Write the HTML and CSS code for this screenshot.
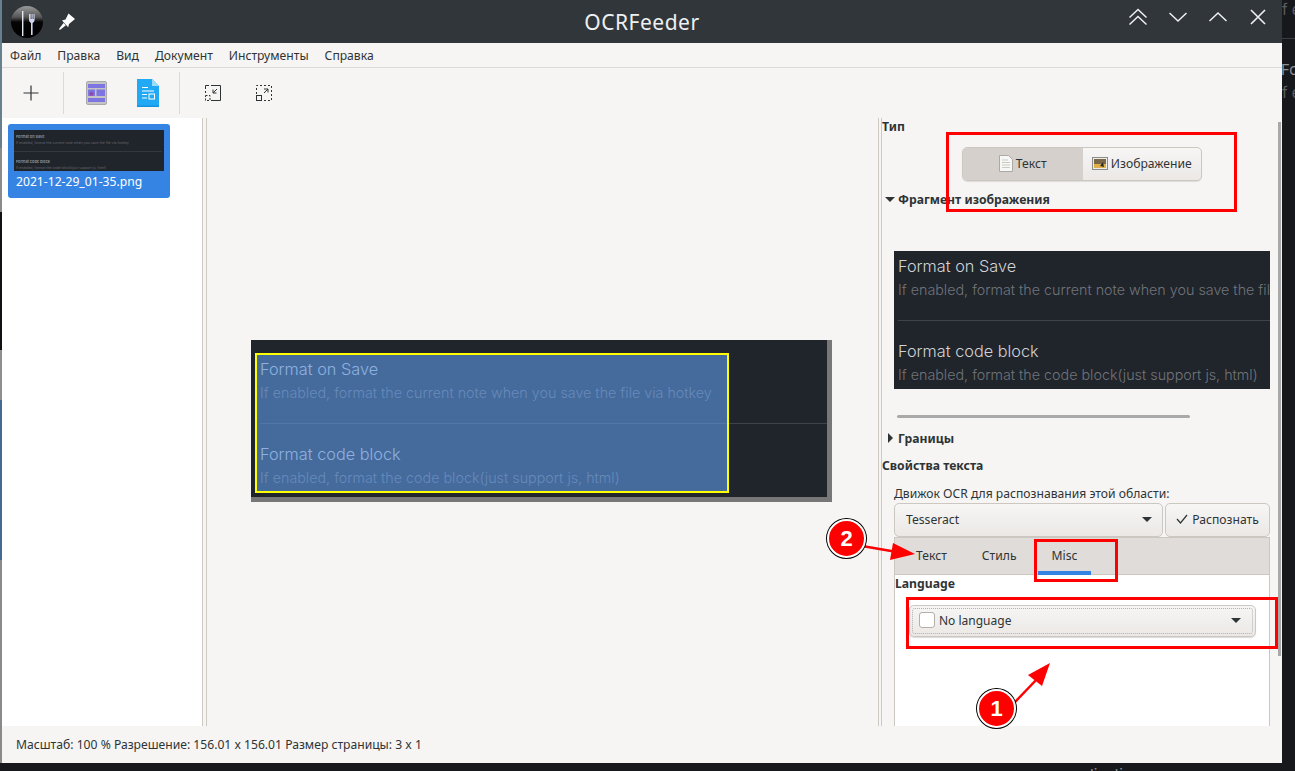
FILE: index.html
```html
<!DOCTYPE html>
<html lang="ru">
<head>
    <meta charset="UTF-8">
    <title>OCRFeeder</title>
    <link rel="stylesheet" href="styles.css">
</head>
<body>
<div class="desktop">
    <div class="desk-left">
        <div class="strip strip-a"></div>
        <div class="strip strip-b"></div>
        <div class="strip strip-c"></div>
        <div class="strip strip-d"></div>
        <div class="strip strip-e"></div>
        <div class="strip strip-f"></div>
    </div>

    <div class="window">
        <header class="titlebar">
            <svg class="app-icon" width="34" height="34" viewBox="0 0 34 34">
                <defs>
                    <linearGradient id="ball" x1="0" y1="0" x2="0" y2="1">
                        <stop offset="0" stop-color="#9a9a9a"/>
                        <stop offset="0.35" stop-color="#555"/>
                        <stop offset="0.5" stop-color="#050505"/>
                        <stop offset="1" stop-color="#000"/>
                    </linearGradient>
                </defs>
                <circle cx="17" cy="17" r="16" fill="url(#ball)"/>
                <path d="M12 6h1.400v25H12z" fill="#e4e8f4"/>
                <path d="M19 9v6q0 2 2 3v12h1.600V18q2-1 2-3V9h-1v5h-1V9h-1v5h-1V9z" fill="#cfd6f0"/>
            </svg>
            <svg class="pin-icon" width="20" height="20" viewBox="0 0 20 20">
                <path d="M11.500 1.500 18 7l-6 5-.8 3.200L5 8.600 8.500 7.600z" fill="#fff"/>
                <path d="M6.500 11 2 17l.9.9 6-4.600z" fill="#fff"/>
            </svg>
            <h1 class="title">OCRFeeder</h1>
            <div class="win-buttons">
                <svg width="18" height="18" viewBox="0 0 18 18"><path d="M.5 9.500 9 1.500l8.500 8M.5 16.500 9 8.500l8.500 8" fill="none" stroke="#eff0f1" stroke-width="1.500"/></svg>
                <svg width="18" height="18" viewBox="0 0 18 18"><path d="M.5 5 9 13l8.500-8" fill="none" stroke="#eff0f1" stroke-width="1.500"/></svg>
                <svg width="18" height="18" viewBox="0 0 18 18"><path d="M.5 13 9 5l8.500 8" fill="none" stroke="#eff0f1" stroke-width="1.500"/></svg>
                <svg width="18" height="18" viewBox="0 0 18 18"><path d="m2 2 14 14M16 2 2 16" fill="none" stroke="#eff0f1" stroke-width="1.600"/></svg>
            </div>
        </header>

        <nav class="menubar">
            <span>Файл</span>
            <span>Правка</span>
            <span>Вид</span>
            <span>Документ</span>
            <span>Инструменты</span>
            <span>Справка</span>
        </nav>

        <div class="toolbar">
            <button class="tool tool-add">
                <svg width="16" height="16" viewBox="0 0 16 16"><path d="M8 .5v15M.5 8h15" stroke="#2e3436" stroke-width="1.200"/></svg>
            </button>
            <div class="tool-sep"></div>
            <button class="tool tool-layout">
                <svg width="21" height="24" viewBox="0 0 21 24">
                    <rect x=".5" y=".5" width="20" height="23" rx="1.500" fill="#c4c4c4" stroke="#a9a9a9"/>
                    <path d="M2 3h17v4H2zM2 8.500h7V15H2zM10.500 8.500H19V15h-8.500zM2 17h17v4H2z" fill="#7c75e2"/>
                    <path d="m5.500 10 1 1.600 1.500.4-1 1.300.1 1.600-1.600-.6-1.600.6.100-1.600-1-1.300 1.500-.4z" fill="#8e4aa8"/>
                </svg>
            </button>
            <button class="tool tool-doc">
                <svg width="22" height="28" viewBox="0 0 22 28">
                    <path d="M0 0h15l7 7v21H0z" fill="#22a9f5"/>
                    <path d="M0 26.500h22V28H0z" fill="#1691dc"/>
                    <path d="m15 0 7 7h-7z" fill="#9adcfb"/>
                    <path d="M5 8.500h6M5 12h12M5 15.500h5M5 19h5" stroke="#fff" stroke-width="1"/>
                    <rect x="12" y="15" width="5.500" height="5" fill="none" stroke="#fff"/>
                </svg>
            </button>
            <div class="tool-sep tool-sep-b"></div>
            <button class="tool tool-fit">
                <svg width="16" height="16" viewBox="0 0 16 16">
                    <path d="M6 .5h9.500V15.500H6" fill="none" stroke="#2e3436"/>
                    <path d="M4 .5H.5V4M.5 6v2" fill="none" stroke="#2e3436"/>
                    <path d="M.5 10.500H5v5H.5z" fill="none" stroke="#2e3436" stroke-dasharray="2 1.500"/>
                    <path d="m12 4-4 4M8 4.500V8h3.500" fill="none" stroke="#2e3436"/>
                </svg>
            </button>
            <button class="tool tool-grow">
                <svg width="16" height="16" viewBox="0 0 16 16">
                    <path d="M.5 9V.5H15.500V15.500H7" fill="none" stroke="#2e3436" stroke-dasharray="2 2"/>
                    <rect x=".5" y="10.500" width="5" height="5" fill="none" stroke="#2e3436"/>
                    <path d="m8 8 4-4M8 4h4v3.500" fill="none" stroke="#2e3436"/>
                </svg>
            </button>
        </div>

        <main class="workspace">
            <aside class="pages">
                <div class="page-card">
                    <div class="thumb">
                        <p class="thumb-title">Format on Save</p>
                        <p class="thumb-desc">If enabled, format the current note when you save the file via hotkey</p>
                        <hr class="thumb-line">
                        <p class="thumb-title">Format code block</p>
                        <p class="thumb-desc">If enabled, format the code block(just support js, html)</p>
                    </div>
                    <div class="page-name">2021-12-29_01-35.png</div>
                </div>
            </aside>
            <div class="pane-sep"></div>

            <section class="canvas">
                <div class="shot">
                    <div class="shot-text shot-first">Format on Save</div>
                    <div class="shot-text shot-desc">If enabled, format the current note when you save the file via hotkey</div>
                    <hr class="shot-line">
                    <div class="shot-text shot-second">Format code block</div>
                    <div class="shot-text shot-desc">If enabled, format the code block(just support js, html)</div>
                    <div class="selection"></div>
                </div>
            </section>
            <div class="pane-sep pane-sep-narrow"></div>

            <section class="props">
                <div class="label">Тип</div>
                <div class="switch">
                    <div class="switch-item switch-on">
                        <svg width="14" height="17" viewBox="0 0 14 17">
                            <path d="M.5.5h9l4 4v12H.500z" fill="#f7f7f5" stroke="#a9a9a6"/>
                            <path d="M3 5h6M3 7.500h8M3 10h8M3 12.500h8" stroke="#c9c9c6"/>
                        </svg>
                        Текст
                    </div>
                    <div class="switch-item">
                        <svg width="16" height="14" viewBox="0 0 16 14">
                            <rect x=".5" y=".5" width="15" height="12" fill="#ededeb" stroke="#8b8b88"/>
                            <rect x="2" y="2" width="12" height="9" fill="#7a6748"/>
                            <path d="M2 7h12v4H2z" fill="#e0b04a"/>
                            <path d="m8 9 3-4 1 5z" fill="#2b2b2b"/>
                        </svg>
                        Изображение
                    </div>
                </div>

                <div class="expander expander-open"><i class="tri tri-down"></i>Фрагмент изображения</div>
                <div class="preview">
                    <div class="shot-text shot-first">Format on Save</div>
                    <div class="shot-text shot-desc">If enabled, format the current note when you save the file via hotkey</div>
                    <hr class="shot-line">
                    <div class="shot-text shot-second">Format code block</div>
                    <div class="shot-text shot-desc">If enabled, format the code block(just support js, html)</div>
                </div>
                <div class="handle"></div>
                <div class="expander expander-closed"><i class="tri tri-right"></i>Границы</div>

                <div class="label label-text">Свойства текста</div>
                <div class="engine-label">Движок OCR для распознавания этой области:</div>
                <div class="engine-row">
                    <div class="combo engine-combo">Tesseract<i class="tri tri-down combo-arrow"></i></div>
                    <div class="combo recognize">
                        <svg width="12" height="10" viewBox="0 0 12 10"><path d="m1 5 3.500 4L11 1" fill="none" stroke="#2e3436" stroke-width="1.200"/></svg>
                        Распознать
                    </div>
                </div>

                <div class="notebook">
                    <div class="tabs">
                        <div class="tab">Текст</div>
                        <div class="tab">Стиль</div>
                        <div class="tab tab-active">Misc</div>
                    </div>
                    <div class="tab-body">
                        <div class="label">Language</div>
                        <div class="combo lang-combo">
                            <div class="lang-inner">
                                <span class="checkbox"></span>
                                No language
                                <i class="tri tri-down combo-arrow"></i>
                            </div>
                        </div>
                    </div>
                </div>
            </section>
        </main>

        <footer class="statusbar">Масштаб: 100 % Разрешение: 156.01 x 156.01 Размер страницы: 3 x 1</footer>

        <!-- пометки поверх окна -->
        <div class="scrollbar"></div>
        <div class="mark mark-type"></div>
        <div class="mark mark-misc"></div>
        <div class="mark mark-lang"></div>
        <svg class="arrows" width="1280" height="763" viewBox="0 0 1280 763">
            <path d="M860 546 895 552" stroke="#f00" stroke-width="2.500"/>
            <path d="M913 554 891 543 888 560z" fill="#f00"/>
            <path d="M1013 702 1036 678" stroke="#f00" stroke-width="2.500"/>
            <path d="M1048 663 1026 675 1040 686z" fill="#f00"/>
        </svg>
        <div class="badge badge-one">1</div>
        <div class="badge badge-two">2</div>
    </div>

    <div class="desk-right">
        <div class="ghost">f enabled</div>
        <hr class="ghost-line">
        <div class="ghost ghost-head">Format</div>
        <div class="ghost ghost-low">f enabled</div>
    </div>

    <div class="desk-corner"></div>
    <div class="desk-bottom"><span>lication</span></div>
    <div class="desk-corner"></div>
</div>
</body>
</html>
```
FILE: styles.css
```css
* {
    box-sizing: border-box;
}
html, body {
    margin: 0;
    padding: 0;
}
body {
    width: 1295px;
    height: 771px;
    overflow: hidden;
    background-color: #16181c;
    font-family: "Noto Sans", sans-serif;
    font-size: 12.15px;
    color: #2e3436;
}
.desktop {
    display: grid;
    grid-template-columns: 2px 1280px 13px;
    grid-template-rows: 763px 8px;
    height: 771px;
}

/* desktop behind the window */
.desk-left {
    display: flex;
    flex-direction: column;
    overflow: hidden;
}
.strip-a { height: 148px; background-color: #66808f; }
.strip-b { height: 64px; background-color: #8b8b8b; }
.strip-c { height: 138px; background-color: #101114; }
.strip-d { height: 50px; background-color: #8f8f8f; }
.strip-e { height: 160px; background-color: #47688f; }
.strip-f { flex: 1; background-color: #8a8a8a; }
.desk-right {
    overflow: hidden;
    background-color: #16181c;
    padding-top: 1px;
}
.ghost {
    font-family: Inter, Roboto, sans-serif;
    font-size: 15px;
    line-height: 18px;
    white-space: nowrap;
    color: #5c5f63;
}
.ghost-line {
    margin: 19px 0 0;
    border: none;
    border-top: 1px solid #3a3d42;
}
.ghost-head {
    margin-top: 22px;
    margin-left: -1px;
    color: #8e9195;
}
.ghost-low {
    margin-top: 5px;
}
.desk-bottom {
    overflow: hidden;
    padding-left: 1088px;
    font-family: Inter, Roboto, sans-serif;
    font-size: 15px;
    line-height: 18px;
    color: #8e9195;
    white-space: nowrap;
}
.desk-bottom span {
    display: block;
    margin-top: 3px;
}

/* window */
.window {
    position: relative;
    display: flex;
    flex-direction: column;
    background-color: #f6f5f3;
    overflow: hidden;
}
.titlebar {
    position: relative;
    display: flex;
    align-items: center;
    height: 43px;
    flex: none;
    background-color: #31363b;
    padding-left: 8px;
}
.pin-icon {
    margin-left: 13px;
}
.title {
    position: absolute;
    left: 0;
    right: 0;
    margin: 0;
    text-align: center;
    font-size: 21px;
    letter-spacing: 0.5px;
    font-weight: 400;
    color: #eff0f1;
}
.win-buttons {
    position: absolute;
    right: 15px;
    top: 8px;
    display: flex;
    gap: 22px;
}
.menubar {
    display: flex;
    align-items: center;
    gap: 16px;
    height: 25px;
    flex: none;
    padding-left: 8px;
    border-bottom: 1px solid #dcd9d6;
}
.toolbar {
    display: flex;
    align-items: center;
    height: 50px;
    flex: none;
}
.tool {
    display: flex;
    align-items: center;
    justify-content: center;
    width: 51px;
    height: 46px;
    padding: 0;
    border: none;
    background: none;
}
.tool-add {
    margin-left: 3px;
    margin-right: 6px;
    width: 52px;
}
.tool-layout {
    margin-left: 7px;
}
.tool-sep {
    width: 1px;
    height: 42px;
    background-color: #dcd9d6;
}
.tool-sep-b {
    margin-left: 6px;
}
.tool-fit {
    margin-left: 7px;
}

.workspace {
    display: flex;
    height: 608px;
    flex: none;
}
.pages {
    width: 200px;
    flex: none;
    background-color: #fff;
    padding: 6px;
}
.page-card {
    width: 162px;
    height: 74px;
    padding: 6px;
    border-radius: 3px;
    background-color: #3584e4;
    color: #fff;
}
.thumb {
    height: 41px;
    padding: 4px 2px 0;
    background-color: #20242b;
    overflow: hidden;
}
.thumb-title {
    margin: 0;
    font-family: Inter, Roboto, sans-serif;
    font-size: 3.8px;
    line-height: 6px;
    font-weight: 600;
    color: #94979c;
}
.thumb-desc {
    margin: 0;
    font-family: Inter, Roboto, sans-serif;
    font-size: 3.5px;
    line-height: 6px;
    white-space: nowrap;
    color: #666a70;
}
.thumb-line {
    margin: 5px 0 7px -2px;
    border: none;
    border-top: 1px solid #33373e;
}
.page-name {
    margin-top: 2px;
    padding-left: 2px;
    line-height: 18px;
    white-space: nowrap;
}
.pane-sep {
    width: 5px;
    flex: none;
    border-left: 1px solid #cfc9c4;
    border-right: 1px solid #cfc9c4;
}
.pane-sep-narrow {
    width: 4px;
}
.canvas {
    width: 671px;
    flex: none;
    padding: 222px 0 0 44px;
}

/* the picture being recognised */
.shot {
    position: relative;
    width: 581px;
    height: 162px;
    padding: 14px 0 0 9px;
    background-color: #20242b;
    border-right: 5px solid #777;
    border-bottom: 5px solid #777;
}
.shot-text {
    font-family: Inter, Roboto, sans-serif;
    font-size: 16.3px;
    font-weight: 300;
    line-height: 18px;
    white-space: nowrap;
    color: #d0d3d6;
}
.shot-first {
    padding-top: 6px;
}
.shot-desc {
    margin-top: 6px;
    font-size: 14.3px;
    color: #70747a;
}
.shot-line {
    margin: 21px 0 21px 0;
    border: none;
    border-top: 1px solid #3f444c;
}
.selection {
    position: absolute;
    left: 4px;
    top: 13px;
    width: 474px;
    height: 140px;
    border: 2px solid #ffff00;
    background-color: rgba(95, 153, 231, 0.6);
}

.props {
    flex: 1;
    min-width: 0;
    overflow: hidden;
}
.label {
    height: 18px;
    line-height: 18px;
    font-weight: 700;
    font-size: 12.2px;
}
.switch {
    display: flex;
    width: 240px;
    height: 34px;
    margin: 11px 0 0 80px;
    border: 1px solid #cdc7c2;
    border-radius: 5px;
    overflow: hidden;
    background: linear-gradient(#f7f6f5, #ebe8e6);
    box-shadow: 0 1px 1px rgba(0, 0, 0, 0.1);
}
.switch-item {
    display: flex;
    align-items: center;
    justify-content: center;
    gap: 3px;
    width: 119px;
    padding-bottom: 1px;
}
.switch-on {
    background-color: #d5d0cc;
    width: 120px;
}
.expander {
    display: flex;
    align-items: center;
    height: 18px;
    font-weight: 700;
    font-size: 12.2px;
}
.expander-open {
    margin-top: 9px;
    padding-left: 3px;
}
.expander-closed {
    margin-top: 11px;
    padding-left: 6px;
}
.tri {
    display: inline-block;
    width: 0;
    height: 0;
}
.tri-down {
    border-left: 5px solid transparent;
    border-right: 5px solid transparent;
    border-top: 5px solid #2e3436;
    margin-right: 3px;
}
.tri-right {
    border-top: 5px solid transparent;
    border-bottom: 5px solid transparent;
    border-left: 5px solid #2e3436;
    margin-right: 5px;
}
.preview {
    width: 376px;
    height: 138px;
    margin: 43px 0 0 12px;
    padding-left: 4px;
    background-color: #20242b;
    overflow: hidden;
}
.handle {
    width: 293px;
    height: 3px;
    margin: 26px 0 0 15px;
    border-radius: 2px;
    background-color: #a9a9a9;
}
.label-text {
    margin-top: 10px;
}
.engine-label {
    height: 18px;
    margin: 10px 0 0 12px;
    line-height: 18px;
}
.engine-row {
    display: flex;
    gap: 2px;
    margin-left: 12px;
    width: 376px;
    height: 34px;
}
.combo {
    display: flex;
    align-items: center;
    border: 1px solid #cdc7c2;
    border-radius: 5px;
    background: linear-gradient(#f7f6f5, #ebe8e6);
}
.engine-combo {
    width: 269px;
    padding-left: 11px;
    padding-bottom: 2px;
}
.combo-arrow {
    margin-left: auto;
    margin-right: 10px;
}
.recognize {
    width: 105px;
    justify-content: center;
    gap: 4px;
    padding-bottom: 2px;
}
.notebook {
    width: 376px;
    height: 189px;
    margin-left: 12px;
    border: 1px solid #cdc7c2;
    border-bottom: none;
    background-color: #fff;
}
.tabs {
    display: flex;
    gap: 7px;
    height: 37px;
    padding-left: 7px;
    background-color: #e0dcd9;
    border-bottom: 1px solid #cdc7c2;
}
.tab {
    display: flex;
    align-items: center;
    padding: 0 14px 2px;
}
.tab-active {
    border-bottom: 4px solid #3584e4;
    padding-top: 2px;
    padding-bottom: 0;
    margin-bottom: -1px;
}
.tab-body .label {
    height: 16px;
    line-height: 16px;
    margin-top: 1px;
}
.lang-combo {
    width: 347px;
    height: 32px;
    margin: 13px 0 0 14px;
    padding: 2px;
    box-shadow: 0 1px 1px rgba(0, 0, 0, 0.15);
}
.lang-inner {
    display: flex;
    align-items: center;
    width: 100%;
    height: 100%;
    padding-left: 6px;
    padding-bottom: 2px;
    border: 1px dotted #b5b0ab;
    border-radius: 3px;
    font-size: 12px;
}
.lang-inner .combo-arrow {
    margin-right: 11px;
}
.checkbox {
    width: 16px;
    height: 16px;
    margin-right: 4px;
    border: 1px solid #b5afa9;
    border-radius: 3px;
    background-color: #fff;
}
.statusbar {
    display: flex;
    align-items: center;
    height: 37px;
    flex: none;
    padding-left: 14px;
}

/* overlays */
.scrollbar {
    position: absolute;
    left: 1276px;
    top: 122px;
    width: 3px;
    height: 534px;
    background-color: #a9a9a9;
}
.mark {
    position: absolute;
    border: 3px solid #ff0000;
}
.mark-type {
    left: 944px;
    top: 132px;
    width: 291px;
    height: 80px;
}
.mark-misc {
    left: 1032px;
    top: 539px;
    width: 84px;
    height: 43px;
}
.mark-lang {
    left: 904px;
    top: 597px;
    width: 372px;
    height: 52px;
}
.arrows {
    position: absolute;
    left: 0;
    top: 0;
    pointer-events: none;
}
.badge {
    position: absolute;
    display: flex;
    align-items: center;
    justify-content: center;
    width: 39px;
    height: 39px;
    border-radius: 50%;
    background-color: #ff0000;
    border: 2px solid #fff;
    box-shadow: 0 0 0 1px #000;
    color: #fff;
    font-family: "Liberation Sans", sans-serif;
    font-size: 22px;
    font-weight: 700;
}
.badge-one {
    left: 975px;
    top: 689px;
}
.badge-two {
    left: 825px;
    top: 519px;
}
```
